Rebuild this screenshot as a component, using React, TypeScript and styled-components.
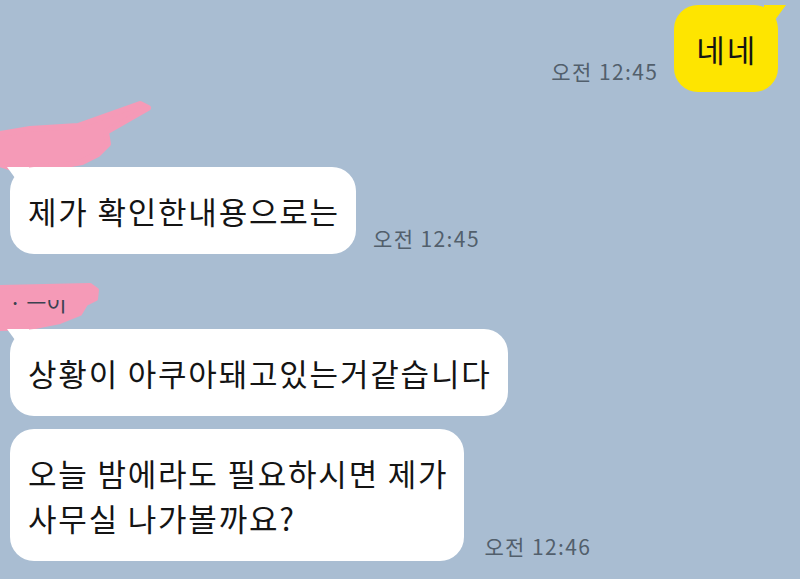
import React from "react";
import styled, { createGlobalStyle } from "styled-components";

const Global = createGlobalStyle`
  html, body { margin: 0; padding: 0; }
  body {
    background: #a9bdd2;
    font-family: "Noto Sans CJK KR", "Noto Sans", sans-serif;
    overflow: hidden;
  }
`;

const Screen = styled.div`
  width: 800px;
  height: 579px;
  background: #a9bdd2;
  display: flex;
  flex-direction: column;
  padding: 5px 0 0 0;
  box-sizing: border-box;
  overflow: hidden;
`;

const Row = styled.div<{ $mine?: boolean; $gap?: number }>`
  display: flex;
  flex-direction: ${(p) => (p.$mine ? "row-reverse" : "row")};
  align-items: flex-end;
  gap: ${(p) => p.$gap ?? 16}px;
  padding: ${(p) => (p.$mine ? "0 22px 0 0" : "0 0 0 10px")};
`;

const Bubble = styled.div<{ $mine?: boolean; $tail?: boolean }>`
  position: relative;
  background: ${(p) => (p.$mine ? "#fee500" : "#ffffff")};
  color: #141414;
  font-size: 31px;
  line-height: 45px;
  padding: 21px ${(p) => (p.$mine ? "21px" : "16px")} 21px ${(p) => (p.$mine ? "22px" : "18px")};
  border-radius: 24px;
  white-space: nowrap;
  letter-spacing: 1.8px;

  &::before {
    content: "";
    display: ${(p) => (p.$tail ? "block" : "none")};
    position: absolute;
    top: 0;
    width: 22px;
    height: 18px;
    background: inherit;
    ${(p) =>
      p.$mine
        ? `right: -8px; clip-path: polygon(100% 0, 0 0, 0 100%, 40% 100%);`
        : `left: -3px; clip-path: polygon(0 0, 100% 0, 100% 100%, 60% 100%);`}
  }
`;

const Time = styled.span<{ $lift?: number }>`
  font-size: 21px;
  color: #525f6c;
  white-space: nowrap;
  margin-bottom: ${(p) => p.$lift ?? 0}px;
  letter-spacing: 1.4px;
`;

const NameBlock = styled.div`
  height: 75px;
  display: flex;
  align-items: flex-start;
`;

const Scribble = styled.svg`
  display: block;
  overflow: visible;
`;

const Spacer = styled.div<{ $h: number }>`
  height: ${(p) => p.$h}px;
  flex-shrink: 0;
`;

const pink = "#f59ab7";

export default function App() {
  return (
    <>
      <Global />
      <Screen>
        <Row $mine>
          <Bubble $mine $tail>네네</Bubble>
          <Time $lift={6}>오전 12:45</Time>
        </Row>

        <NameBlock>
          <Scribble width="160" height="75" viewBox="0 0 160 75">
            <path
              d="M0 42 L30 37 L78 34 L140 12 L148 16 L106 40 L108 52 L98 62 L82 70 L60 74 L12 76 L0 72 Z"
              fill={pink}
              stroke={pink}
              strokeWidth="6"
              strokeLinejoin="round"
            />
          </Scribble>
        </NameBlock>

        <Row $gap={17}>
          <Bubble $tail>제가 확인한내용으로는</Bubble>
          <Time $lift={1}>오전 12:45</Time>
        </Row>

        <NameBlock>
          <Scribble width="110" height="75" viewBox="0 0 110 75">
            <defs>
              <clipPath id="nameClip">
                <rect x="0" y="46" width="110" height="14" />
              </clipPath>
            </defs>
            <path
              d="M0 33 L90 31 L97 36 L96 45 L86 50 L80 60 L60 68 L30 74 L0 75 Z"
              fill={pink}
              stroke={pink}
              strokeWidth="4"
              strokeLinejoin="round"
            />
            <text
              x="9"
              y="57"
              fontSize="22"
              fill="#3b4250"
              fontFamily="Noto Sans CJK KR, sans-serif"
              clipPath="url(#nameClip)"
            >
              · ㅡ이
            </text>
          </Scribble>
        </NameBlock>

        <Row>
          <Bubble $tail>상황이 아쿠아돼고있는거같습니다</Bubble>
        </Row>

        <Spacer $h={13} />

        <Row $gap={20}>
          <Bubble>
            오늘 밤에라도 필요하시면 제가
            <br />
            사무실 나가볼까요?
          </Bubble>
          <Time $lift={0}>오전 12:46</Time>
        </Row>
      </Screen>
    </>
  );
}
